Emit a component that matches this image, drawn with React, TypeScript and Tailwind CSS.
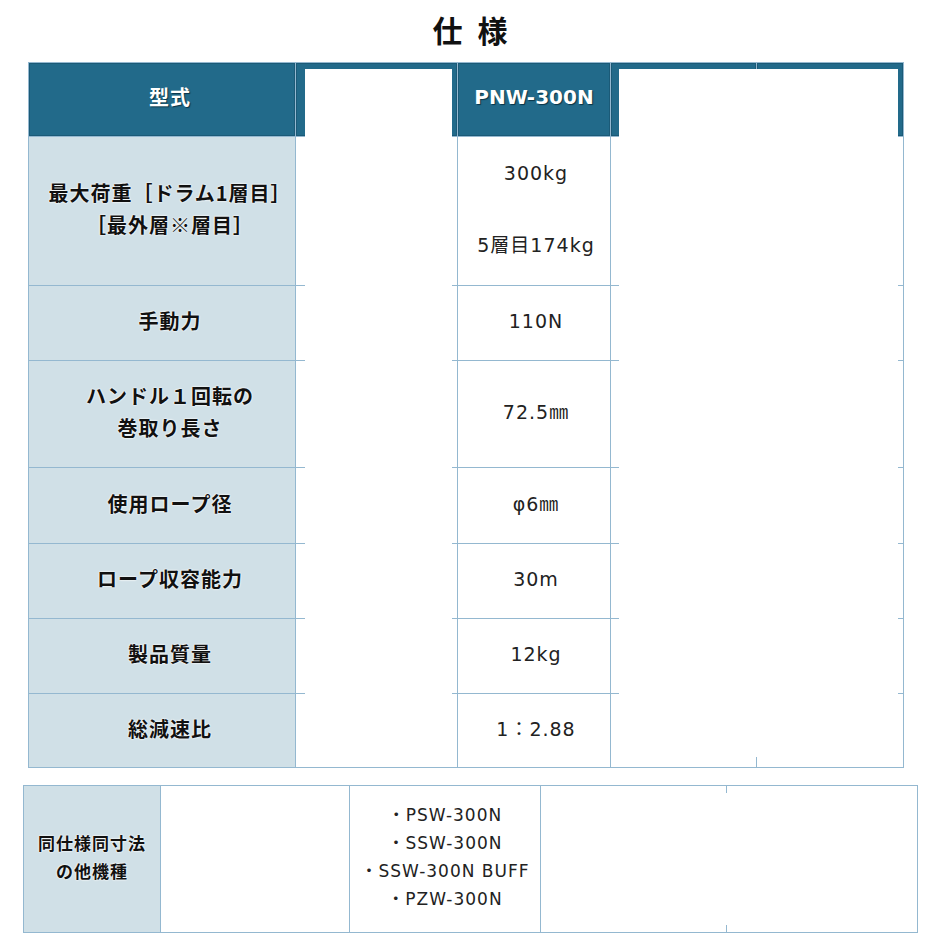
import React from 'react'

const LINE = 'border-[#94b8d0]'
const JP = "font-['Noto_Sans_CJK_JP',sans-serif]"
const VAL = "font-['DejaVu_Sans','Noto_Sans_CJK_JP',sans-serif]"

type Row = { label: string[]; value: string[]; h: string }

const ROWS: Row[] = [
  { label: ['最大荷重［ドラム1層目］', '［最外層※層目］'], value: ['300kg', '\u00a0', '5層目174kg'], h: 'h-[149px]' },
  { label: ['手動力'], value: ['110N'], h: 'h-[75px]' },
  { label: ['ハンドル１回転の', '巻取り長さ'], value: ['72.5㎜'], h: 'h-[107px]' },
  { label: ['使用ロープ径'], value: ['φ6㎜'], h: 'h-[76px]' },
  { label: ['ロープ収容能力'], value: ['30m'], h: 'h-[75px]' },
  { label: ['製品質量'], value: ['12kg'], h: 'h-[75px]' },
  { label: ['総減速比'], value: ['1：2.88'], h: 'h-[74px]' },
]

const OTHERS = ['・PSW-300N', '・SSW-300N', '・SSW-300N BUFF', '・PZW-300N']

function Label({ lines }: { lines: string[] }) {
  return (
    <div className={`${JP} pl-4 text-center text-[20px] font-bold leading-[32px] tracking-[1px] text-[#111] [text-shadow:0_0_2px_#fff,0_0_2px_#fff]`}>
      {lines.map((l, i) => <div key={i}>{l}</div>)}
    </div>
  )
}

export default function App() {
  const head = `flex h-[74px] items-center justify-center border-r border-b pb-[6px] ${LINE} bg-[#226a8a] shadow-[inset_0_0_0_1px_#1b5a77]`
  const body = `flex items-center justify-center border-r border-b pb-1 ${LINE}`

  return (
    <div className="min-h-[940px] w-[940px] bg-white">
      {/* title */}
      <div className={`${JP} flex h-[62px] justify-center gap-[15px] pt-[12px] text-[30px] font-bold leading-[34px] text-[#111]`}>
        <span>仕</span>
        <span>様</span>
      </div>

      {/* main spec table */}
      <div className={`relative ml-[28px] w-[876px] border-l border-t ${LINE}`}>
        <div className="grid grid-cols-[267px_162px_153px_146px_147px]">
          <div className={head}>
            <span className={`${JP} pl-4 text-[20px] font-bold tracking-[1px] text-white [text-shadow:1px_1px_1px_#0b3447]`}>型式</span>
          </div>
          <div className={head} />
          <div className={head}>
            <span className={`${VAL} text-[20px] font-bold text-white [text-shadow:1px_1px_1px_#0b3447]`}>PNW-300N</span>
          </div>
          <div className={head} />
          <div className={head} />

          {ROWS.map((r, i) => (
            <React.Fragment key={i}>
              <div className={`${body} ${r.h} bg-[#d0e0e7]`}>
                <Label lines={r.label} />
              </div>
              <div className={`${body} ${r.h} bg-white`} />
              <div className={`${body} ${r.h} bg-white`}>
                <div className={`${VAL} pl-1 text-center text-[19px] leading-[36px] tracking-[1px] text-[#222]`}>
                  {r.value.map((v, j) => <div key={j}>{v}</div>)}
                </div>
              </div>
              <div className={`${body} ${r.h} bg-white`} />
              <div className={`${body} ${r.h} bg-white`} />
            </React.Fragment>
          ))}
        </div>

        {/* blanked-out columns */}
        <div className="absolute left-[276px] top-[6px] h-[688px] w-[147px] bg-white" />
        <div className="absolute left-[590px] top-[6px] h-[688px] w-[279px] bg-white" />
      </div>

      {/* other models table */}
      <div className={`relative ml-[23px] mt-[17px] w-[895px] border-l border-t ${LINE}`}>
        <div className="grid grid-cols-[137px_189px_191px_186px_191px]">
          <div className={`${body} h-[147px] bg-[#d0e0e7]`}>
            <div className={`${JP} text-center text-[17px] font-bold leading-[28px] tracking-[1px] text-[#111] [text-shadow:0_0_2px_#fff,0_0_2px_#fff]`}>
              <div>同仕様同寸法</div>
              <div>の他機種</div>
            </div>
          </div>
          <div className={`${body} h-[147px] bg-white`} />
          <div className={`${body} h-[147px] bg-white`}>
            <div className={`${VAL} text-center text-[17px] leading-[28px] tracking-[1px] text-[#222]`}>
              {OTHERS.map((m) => <div key={m}>{m}</div>)}
            </div>
          </div>
          <div className={`${body} h-[147px] bg-white`} />
          <div className={`${body} h-[147px] bg-white`} />
        </div>
        <div className="absolute left-[517px] top-[7px] h-[132px] w-[376px] bg-white" />
      </div>
    </div>
  )
}
